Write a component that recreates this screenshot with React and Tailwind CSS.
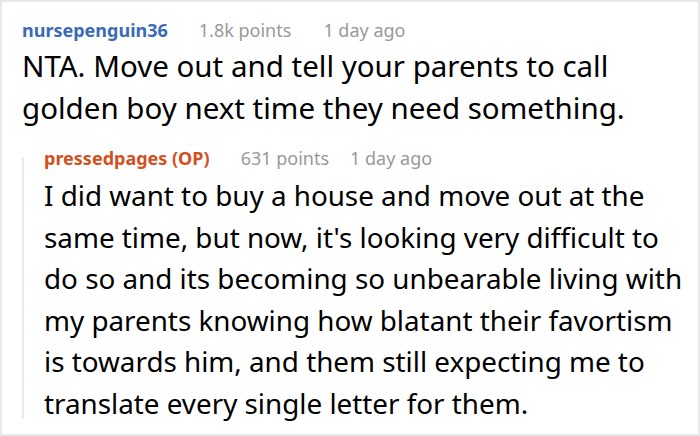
export default function App() {
    return (
        <div className="w-[700px] h-[436px] bg-white border-2 border-[#e8e8e8] overflow-hidden" style={{ fontFamily: '"Noto Sans", sans-serif' }}>
            <div className="pl-5 pr-[8px] pt-[16px]">
                {/* comentario principal */}
                <div className="flex items-baseline text-[18px] leading-[24px]">
                    <span className="font-bold text-[#3a6bb7]">nursepenguin36</span>
                    <span className="ml-[31px] text-[#999999]">1.8k points</span>
                    <span className="ml-[32px] text-[#999999]">1 day ago</span>
                </div>
                <p className="mt-[3px] text-[29.5px] leading-[42px] text-black">
                    NTA. Move out and tell your parents to call golden boy next time they need something.
                </p>

                {/* respuesta */}
                <div className="mt-[17px] flex">
                    <div className="w-[2px] shrink-0 bg-[#e8e8e8] mt-[12px] mb-[7px]"></div>
                    <div className="pl-5">
                        <div className="flex items-baseline text-[18px] leading-[24px]">
                            <span className="font-bold text-[#d2501e]">pressedpages (OP)</span>
                            <span className="ml-[31px] text-[#999999]">631 points</span>
                            <span className="ml-[21px] text-[#999999]">1 day ago</span>
                        </div>
                        <p className="mt-[5px] text-[27.8px] leading-[41.6px] text-black">
                            I did want to buy a house and move out at the same time, but now, it's looking very difficult to do so and its becoming so unbearable living with my parents knowing how blatant their favortism is towards him, and them still expecting me to translate every single letter for them.
                        </p>
                    </div>
                </div>
            </div>
        </div>
    );
}
